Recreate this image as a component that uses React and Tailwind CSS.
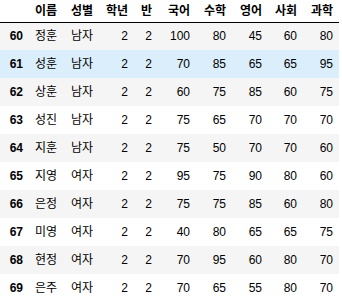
import React from 'react';

const columns = ['이름', '성별', '학년', '반', '국어', '수학', '영어', '사회', '과학'];

const rows = [
  [60, '정훈', '남자', 2, 2, 100, 80, 45, 60, 80],
  [61, '성훈', '남자', 2, 2, 70, 85, 65, 65, 95],
  [62, '상훈', '남자', 2, 2, 60, 75, 85, 60, 75],
  [63, '성진', '남자', 2, 2, 75, 65, 70, 70, 70],
  [64, '지훈', '남자', 2, 2, 75, 50, 70, 70, 60],
  [65, '지영', '여자', 2, 2, 95, 75, 90, 80, 60],
  [66, '은정', '여자', 2, 2, 75, 75, 85, 60, 80],
  [67, '미영', '여자', 2, 2, 40, 80, 65, 65, 75],
  [68, '현정', '여자', 2, 2, 70, 95, 60, 80, 70],
  [69, '은주', '여자', 2, 2, 70, 65, 55, 80, 70],
];

// column widths: index, then each data column
const widths = ['w-[29px]', 'w-[34px]', 'w-[36px]', 'w-[35px]', 'w-[24px]', 'w-[38px]', 'w-[36px]', 'w-[36px]', 'w-[35px]', 'w-[36px]'];

const rowBg = (idx) => {
  if (idx === 1) return 'bg-[#dbeefc]'; // hovered row
  return idx % 2 === 0 ? 'bg-[#f5f5f5]' : 'bg-white';
};

const App = () => {
  return (
    <div className="w-[342px] h-[304px] bg-white overflow-hidden text-black text-[12px] font-['Liberation_Sans','Noto_Sans_CJK_KR',sans-serif]">
      <table className="table-fixed border-collapse w-[339px]">
        <colgroup>
          {widths.map((w, i) => (
            <col key={i} className={w} />
          ))}
        </colgroup>
        <thead>
          <tr className="h-[22px] border-b border-black">
            <th className="pr-[6px]"></th>
            {columns.map((c) => (
              <th key={c} className="pr-[6px] text-right font-bold leading-none align-middle">{c}</th>
            ))}
          </tr>
        </thead>
        <tbody>
          {rows.map((r, idx) => (
            <tr key={r[0]} className={`h-[28px] ${rowBg(idx)}`}>
              {r.map((v, ci) => (
                ci === 0 ? (
                  <th key={ci} className="pr-[6px] text-right font-bold leading-none align-middle">{v}</th>
                ) : (
                  <td key={ci} className="pr-[6px] text-right leading-none align-middle">{v}</td>
                )
              ))}
            </tr>
          ))}
        </tbody>
      </table>
    </div>
  );
};

export default App;
